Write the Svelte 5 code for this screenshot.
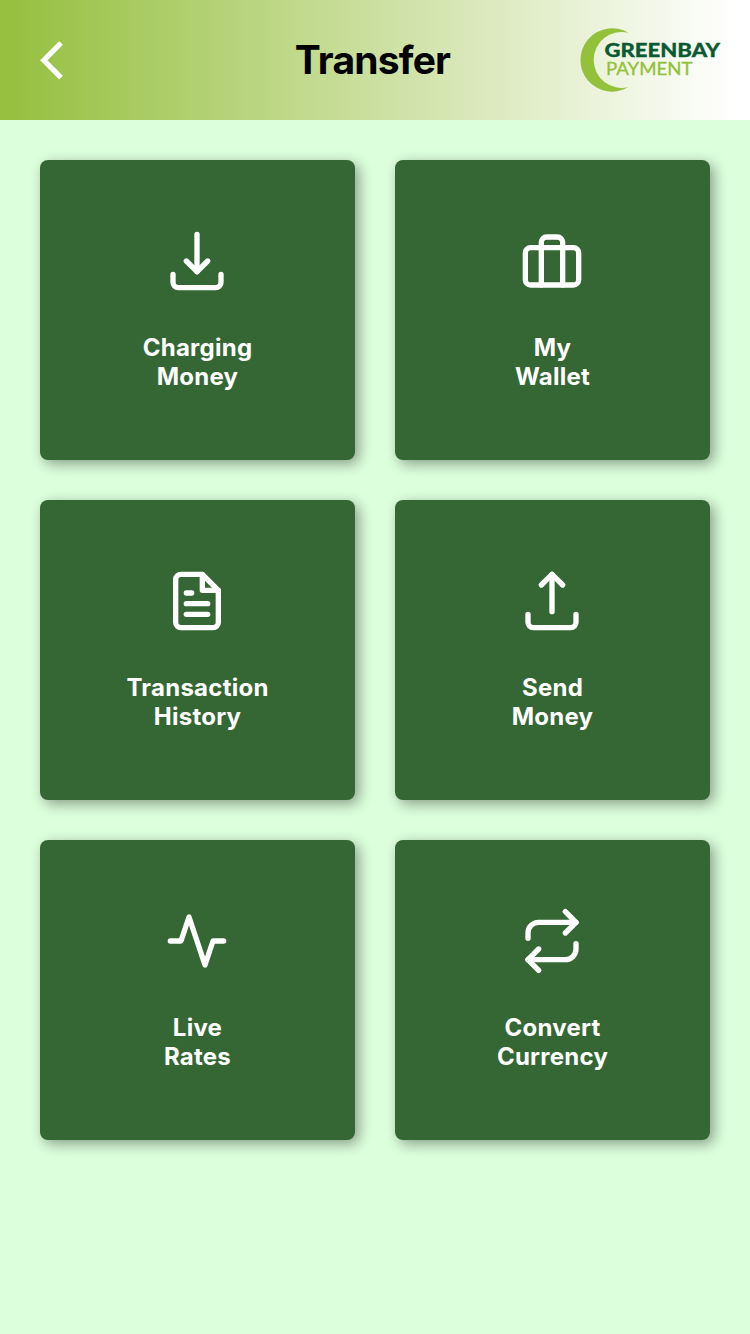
<script>
  const title = 'Transfer';

  // 24x24 stroke icons, one list of paths each
  const icons = {
    download: ['M3 17v3a2 2 0 0 0 2 2h14a2 2 0 0 0 2-2v-3', 'M8 12l4 4 4-4', 'M12 2v14'],
    briefcase: [
      'M4 7h16a2 2 0 0 1 2 2v10a2 2 0 0 1-2 2H4a2 2 0 0 1-2-2V9a2 2 0 0 1 2-2z',
      'M16 21V5a2 2 0 0 0-2-2h-4a2 2 0 0 0-2 2v16'
    ],
    file: [
      'M14 2H6a2 2 0 0 0-2 2v16a2 2 0 0 0 2 2h12a2 2 0 0 0 2-2V8z',
      'M14 2v6h6',
      'M16 13H8',
      'M16 17H8',
      'M10 9H8'
    ],
    upload: ['M3 17v3a2 2 0 0 0 2 2h14a2 2 0 0 0 2-2v-3', 'M16 6l-4-4-4 4', 'M12 2v14'],
    activity: ['M22 12h-4l-3 9L9 3l-3 9H2'],
    repeat: ['M17 1l4 4-4 4', 'M3 11V9a4 4 0 0 1 4-4h14', 'M7 23l-4-4 4-4', 'M21 13v2a4 4 0 0 1-4 4H3']
  };

  const cards = [
    { icon: 'download', lines: ['Charging', 'Money'] },
    { icon: 'briefcase', lines: ['My', 'Wallet'] },
    { icon: 'file', lines: ['Transaction', 'History'] },
    { icon: 'upload', lines: ['Send', 'Money'] },
    { icon: 'activity', lines: ['Live', 'Rates'] },
    { icon: 'repeat', lines: ['Convert', 'Currency'] }
  ];
</script>

<div class="screen">
  <header class="header">
    <button class="back" aria-label="Back">
      <svg width="24" height="40" viewBox="0 0 24 40">
        <path d="M21 3L3.8 20.3L21 37.6" />
      </svg>
    </button>
    <h1 class="title">{title}</h1>
    <svg class="logo" width="142" height="66" viewBox="0 0 142 66">
      <path d="M49.5 5.8A31.7 31.7 0 1 0 49.5 60.1A28 28 0 1 1 49.5 5.8z" fill="#93c13a" />
      <text class="brand" x="25.5" y="30.4" textLength="115.5" lengthAdjust="spacingAndGlyphs">GREENBAY</text>
      <text class="brand-sub" x="27" y="47.8" textLength="86.5" lengthAdjust="spacingAndGlyphs">PAYMENT</text>
    </svg>
  </header>

  <main class="grid">
    {#each cards as card (card.icon)}
      <button class="card">
        <svg class="icon" viewBox="0 0 24 24">
          {#each icons[card.icon] as d}
            <path {d} />
          {/each}
        </svg>
        <span class="label">
          {#each card.lines as line}
            <span>{line}</span>
          {/each}
        </span>
      </button>
    {/each}
  </main>
</div>

<style>
  :global(body) {
    margin: 0;
    background: #dcffdc;
  }

  .screen {
    width: 750px;
    min-height: 1334px;
    background: #dcffdc;
    font-family: Inter, "Liberation Sans", sans-serif;
  }

  button {
    border: 0;
    padding: 0;
    font-family: inherit;
  }

  .header {
    display: grid;
    grid-template-columns: 1fr auto 1fr;
    align-items: center;
    height: 120px;
    padding: 0 29px 0 40px;
    box-sizing: border-box;
    background: linear-gradient(to right, #95bf3d, #ffffff 98%);
  }

  .back {
    justify-self: start;
    display: flex;
    background: none;
  }

  .back path {
    fill: none;
    stroke: #fff;
    stroke-width: 5.2;
  }

  .title {
    margin: -1px 0 0 -16px;
    font-size: 39px;
    font-weight: 700;
    letter-spacing: -0.8px;
    color: #000;
  }

  .logo {
    justify-self: end;
  }

  .brand,
  .brand-sub {
    font-family: Lato, "Open Sans", sans-serif;
  }

  .brand {
    font-size: 18px;
    font-weight: 900;
    fill: #0b5a34;
    stroke: #0b5a34;
    stroke-width: 0.3;
  }

  .brand-sub {
    font-size: 17px;
    font-weight: 400;
    fill: #93c13a;
    stroke: #93c13a;
    stroke-width: 0.3;
  }

  .grid {
    display: grid;
    grid-template-columns: 315px 315px;
    grid-auto-rows: 300px;
    gap: 40px;
    padding: 40px;
  }

  .card {
    display: flex;
    flex-direction: column;
    align-items: center;
    justify-content: flex-start;
    padding-top: 69.3px;
    border-radius: 8px;
    background: #356735;
    color: #fff;
    box-shadow: 4px 4px 14px rgba(0, 0, 0, 0.38);
  }

  .icon {
    width: 64px;
    height: 64px;
    margin-right: 2px;
    overflow: visible;
    fill: none;
    stroke: #fff;
    stroke-width: 2;
    stroke-linecap: round;
    stroke-linejoin: round;
  }

  .label {
    display: flex;
    flex-direction: column;
    align-items: center;
    margin-top: 40px;
    font-size: 24px;
    font-weight: 700;
    line-height: 29px;
    letter-spacing: 0.25px;
  }
</style>
